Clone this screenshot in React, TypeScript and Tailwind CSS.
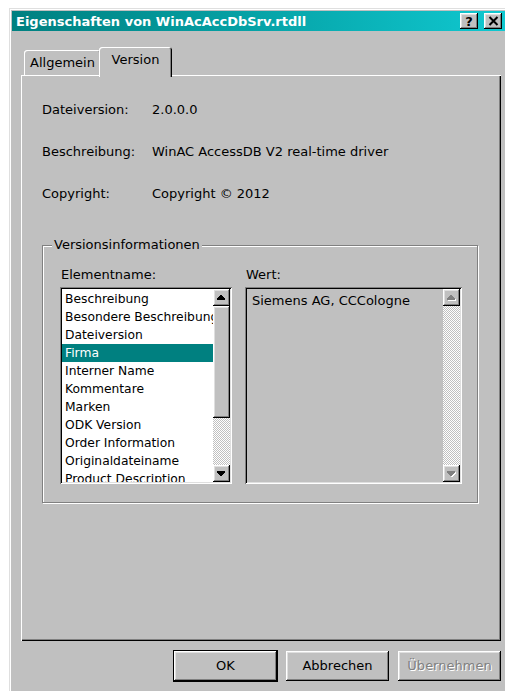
import React from "react";

// Win9x-style bevels
const raised =
  "shadow-[inset_-1px_-1px_#000,inset_1px_1px_#fff,inset_-2px_-2px_#808080,inset_2px_2px_#dfdfdf]";
const sunken =
  "shadow-[inset_1px_1px_#808080,inset_-1px_-1px_#fff,inset_2px_2px_#000,inset_-2px_-2px_#dfdfdf]";
const dither =
  "bg-[image:repeating-conic-gradient(#c0c0c0_0_25%,#fff_0_50%)] bg-[length:2px_2px]";

const fields = [
  ["Dateiversion:", "2.0.0.0"],
  ["Beschreibung:", "WinAC AccessDB V2 real-time driver"],
  ["Copyright:", "Copyright © 2012"],
];

const elements = [
  "Beschreibung",
  "Besondere Beschreibung",
  "Dateiversion",
  "Firma",
  "Interner Name",
  "Kommentare",
  "Marken",
  "ODK Version",
  "Order Information",
  "Originaldateiname",
  "Product Description",
];

function Arrow({ dir, disabled }: { dir: "up" | "down"; disabled?: boolean }) {
  const pts = dir === "up" ? "3,0 4,0 7,3 7,4 0,4 0,3" : "0,0 7,0 7,1 4,4 3,4 0,1";
  return (
    <svg width="9" height="6" viewBox="0 0 8 5" shapeRendering="crispEdges">
      {disabled && <polygon points={pts} fill="#fff" transform="translate(1,1)" />}
      <polygon points={pts} fill={disabled ? "#808080" : "#000"} />
    </svg>
  );
}

function ScrollButton({ dir, disabled }: { dir: "up" | "down"; disabled?: boolean }) {
  return (
    <div className={`flex h-[17px] w-[17px] shrink-0 items-center justify-center bg-[#c0c0c0] ${raised}`}>
      <Arrow dir={dir} disabled={disabled} />
    </div>
  );
}

function Button({ children, primary, disabled }: { children: React.ReactNode; primary?: boolean; disabled?: boolean }) {
  return (
    <div
      className={`flex h-[30px] w-[103px] items-center justify-center bg-[#c0c0c0] text-[13px] ${raised} ${
        primary ? "outline outline-1 outline-black" : ""
      } ${disabled ? "text-[#808080] [text-shadow:1px_1px_#fff]" : "text-black"}`}
    >
      {children}
    </div>
  );
}

export default function App() {
  return (
    <div className="h-[691px] w-[505px] overflow-hidden bg-white pl-[9px] pt-[8px] font-['DejaVu_Sans',sans-serif] text-black">
      <div className="h-[700px] w-[499px] bg-[#c0c0c0] p-[3px] shadow-[inset_-1px_-1px_#000,inset_1px_1px_#dfdfdf,inset_-2px_-2px_#808080,inset_2px_2px_#fff]">
        {/* caption */}
        <div className="flex h-[20px] items-center bg-gradient-to-r from-[#008080] to-[#10c8d0] pl-[4px] pr-[3px]">
          <span className="text-[13px] font-bold leading-none text-white">Eigenschaften von WinAcAccDbSrv.rtdll</span>
          <div className="ml-auto flex gap-[6px]">
            <div className={`flex h-[16px] w-[18px] items-center justify-center bg-[#c0c0c0] text-[13px] font-bold leading-none ${raised}`}>
              ?
            </div>
            <div className={`flex h-[16px] w-[18px] items-center justify-center bg-[#c0c0c0] ${raised}`}>
              <svg width="11" height="10" viewBox="0 0 11 10">
                <path d="M1.5 1 L9.5 9 M9.5 1 L1.5 9" stroke="#000" strokeWidth="2" />
              </svg>
            </div>
          </div>
        </div>

        <div className="pl-[9px] pr-[4px]">
          {/* tabs */}
          <div className="relative z-10 mt-[16px] flex h-[28px] items-end">
            <div className="ml-[3px] flex h-[25px] w-[77px] items-center justify-center rounded-t-[3px] bg-[#c0c0c0] text-[13px] shadow-[inset_1px_1px_#fff,inset_-1px_0_#000,inset_-2px_0_#808080]">
              Allgemein
            </div>
            <div className="-mb-[2px] -ml-[2px] flex h-[30px] w-[73px] items-center justify-center rounded-t-[3px] bg-[#c0c0c0] pb-[4px] text-[13px] shadow-[inset_1px_1px_#fff,inset_-1px_0_#000,inset_-2px_0_#808080]">
              Version
            </div>
          </div>

          {/* tab page */}
          <div className="h-[566px] w-[480px] bg-[#c0c0c0] px-[21px] pt-[27px] shadow-[inset_1px_1px_#fff,inset_-1px_-1px_#000,inset_-2px_-2px_#808080]">
            <div className="flex flex-col gap-[26px]">
              {fields.map(([label, value]) => (
                <div key={label} className="flex h-[16px] text-[13px] leading-[16px]">
                  <span className="w-[110px]">{label}</span>
                  <span>{value}</span>
                </div>
              ))}
            </div>

            {/* group box */}
            <div className="relative mt-[43px] h-[258px] w-[436px] border border-[#808080] pl-[17px] pt-[21px] shadow-[inset_1px_1px_#fff,1px_1px_#fff]">
              <span className="absolute left-[9px] top-[-9px] bg-[#c0c0c0] px-[2px] text-[13px] leading-[16px]">
                Versionsinformationen
              </span>
              <div className="flex gap-[13px]">
                <div className="flex flex-col">
                  <span className="h-[16px] pl-[1px] text-[13px] leading-[16px]">Elementname:</span>
                  <div className={`mt-[4px] flex h-[197px] w-[172px] bg-white p-[2px] ${sunken}`}>
                    <div className="min-w-0 flex-1 overflow-hidden pt-[1px]">
                      {elements.map((item) => (
                        <div
                          key={item}
                          className={`h-[18px] whitespace-nowrap pl-[3px] text-[12.3px] leading-[18px] ${
                            item === "Firma" ? "bg-[#008080] text-white" : ""
                          }`}
                        >
                          {item}
                        </div>
                      ))}
                    </div>
                    <div className="flex w-[17px] flex-col">
                      <ScrollButton dir="up" />
                      <div className={`h-[112px] shrink-0 bg-[#c0c0c0] ${raised}`} />
                      <div className={`flex-1 ${dither}`} />
                      <ScrollButton dir="down" />
                    </div>
                  </div>
                </div>

                <div className="flex flex-col">
                  <span className="h-[16px] pl-[1px] text-[13px] leading-[16px]">Wert:</span>
                  <div className={`mt-[4px] flex h-[197px] w-[217px] bg-[#c0c0c0] p-[2px] ${sunken}`}>
                    <div className="flex-1 pl-[5px] pt-[4px] text-[13px] leading-[16px]">Siemens AG, CCCologne</div>
                    <div className="flex w-[17px] flex-col">
                      <ScrollButton dir="up" disabled />
                      <div className={`flex-1 ${dither}`} />
                      <ScrollButton dir="down" disabled />
                    </div>
                  </div>
                </div>
              </div>
            </div>
          </div>

          {/* dialog buttons */}
          <div className="mt-[10px] flex justify-end gap-[9px]">
            <Button primary>OK</Button>
            <Button>Abbrechen</Button>
            <Button disabled>Übernehmen</Button>
          </div>
        </div>
      </div>
    </div>
  );
}
